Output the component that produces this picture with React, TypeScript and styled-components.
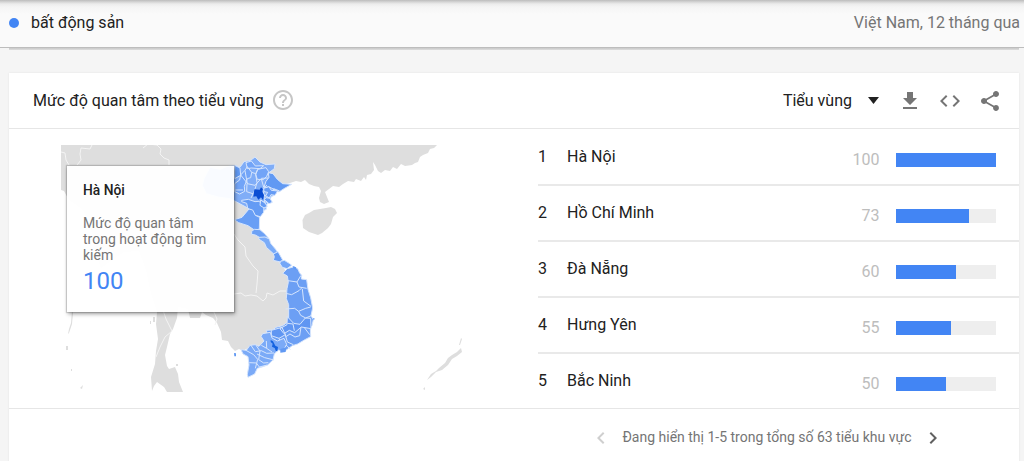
import React from "react";
import styled, { createGlobalStyle } from "styled-components";

const GlobalStyle = createGlobalStyle`
  * { box-sizing: border-box; }
  body {
    margin: 0;
    background: #f5f5f5;
    font-family: Roboto, "Liberation Sans", sans-serif;
    color: #212121;
    overflow: hidden;
  }
`;

const Page = styled.div`
  height: 461px;
  overflow: hidden;
`;

const TopBar = styled.header`
  height: 48px;
  display: flex;
  align-items: center;
  justify-content: space-between;
  padding: 0 4px 1px 9px;
  border-bottom: 1px solid #bdbdbd;
  background: linear-gradient(#bcbcbc 0, #d6d6d6 2px, #ececec 4px, #f5f5f5 7px, #fafafa 14px);
`;

const Term = styled.div`
  display: flex;
  align-items: center;
  gap: 12px;
  font-size: 16px;
  line-height: 20px;
`;

const Dot = styled.span`
  width: 10px;
  height: 10px;
  border-radius: 50%;
  background: #4285f4;
`;

const Scope = styled.div`
  font-size: 16px;
  line-height: 20px;
  color: #757575;
`;

const PreviousEdge = styled.div`
  height: 2px;
  margin: 0 5px 23px 9px;
  background: linear-gradient(#c8c8c8, #dedede);
`;

const Card = styled.main`
  margin: 0 5px 0 9px;
  height: 400px;
  background: #fff;
  box-shadow: 0 0 2px rgba(0, 0, 0, 0.08);
`;

const CardHeader = styled.div`
  height: 56px;
  display: flex;
  align-items: center;
  padding: 0 17px 0 24px;
  border-bottom: 1px solid #e6e6e6;
`;

const Title = styled.h1`
  margin: 0;
  font-size: 16px;
  line-height: 20px;
  font-weight: 400;
`;

const HelpIcon = styled.svg`
  width: 24px;
  height: 24px;
  margin-left: 7px;
  margin-top: -2px;
  fill: #c6c6c6;
`;

const Tools = styled.div`
  margin-left: auto;
  display: flex;
  align-items: center;
`;

const Picker = styled.div`
  display: flex;
  align-items: center;
  gap: 16px;
  font-size: 16px;
  line-height: 20px;
`;

const ToolIcon = styled.svg<{ $gap: number }>`
  width: 24px;
  height: 24px;
  margin-left: ${(p) => p.$gap}px;
  fill: #757575;
`;

const CardBody = styled.div`
  height: 280px;
  display: flex;
  border-bottom: 1px solid #e6e6e6;
`;

const MapPane = styled.div`
  position: relative;
  width: 529px;
  padding: 16px 0 0 52px;
`;

const MapSvg = styled.svg`
  display: block;
`;

const Tooltip = styled.div`
  position: absolute;
  left: 57.5px;
  top: 36.5px;
  width: 167px;
  height: 146px;
  padding: 16px 16px 16px 16.5px;
  background: rgba(255, 255, 255, 0.95);
  box-shadow: 0 0 1px 1px rgba(0, 0, 0, 0.15), 1px 2px 4px rgba(0, 0, 0, 0.38);
`;

const TipPlace = styled.div`
  font-size: 13.8px;
  line-height: 16px;
  font-weight: 500;
`;

const TipLabel = styled.div`
  margin-top: 17px;
  font-size: 14px;
  line-height: 16.3px;
  color: #757575;
  white-space: nowrap;
`;

const TipValue = styled.div`
  margin-top: 4px;
  font-size: 24px;
  line-height: 28px;
  color: #4285f4;
`;

const Ranking = styled.div`
  flex: 1;
  padding-top: 1px;
`;

const RankRow = styled.div`
  height: 56px;
  display: flex;
  align-items: center;
  border-bottom: 2px solid #e9e9e9;
  padding-right: 23.500px;
  font-size: 16px;
  line-height: 20px;
  &:last-child {
    height: 54px;
    border-bottom: 0;
  }
`;

const Rank = styled.span`
  width: 29px;
  margin-top: -1px;
`;

const Region = styled.span`
  flex: 1;
  margin-top: -1px;
`;

const Score = styled.span`
  color: #bdbdbd;
  padding-top: 6px;
`;

const Track = styled.span`
  width: 100px;
  height: 14px;
  margin: 5px 0 0 16px;
  background: #eee;
`;

const Fill = styled.span`
  display: block;
  height: 100%;
  background: #4285f4;
`;

const Pager = styled.div`
  height: 56px;
  display: flex;
  align-items: center;
  justify-content: flex-end;
  padding-right: 74.500px;
  font-size: 14px;
  color: #757575;
`;

const PagerArrow = styled.svg<{ $off?: boolean }>`
  width: 24px;
  height: 24px;
  margin: 2px 0 0;
  fill: ${(p) => (p.$off ? "#cfcfcf" : "#616161")};
`;

const PagerText = styled.span`
  margin: 0 9px;
`;

const regions = [
  { name: "Hà Nội", score: 100 },
  { name: "Hồ Chí Minh", score: 73 },
  { name: "Đà Nẵng", score: 60 },
  { name: "Hưng Yên", score: 55 },
  { name: "Bắc Ninh", score: 50 },
];

function VietnamMap() {
  return (
    <MapSvg width="405" height="248" viewBox="61 145 405 248" strokeLinejoin="round">
      <g fill="#dedede">
        <path d="M61 145H437L434 148 430 149 428 153 423 155 420 157 418 162 415 163 412 165 405 166 401 164 397 169 393 167 390 171 385 170 381 173 378 171 375 165 373 162 374 170 371 174 367 175 366 180 364 177 361 181 356 179 354 182 348 181 343 184 339 187 333 186 329 189 325 192 327 197 329 202 324 204 320 202 319 198 321 191 319 187 314 186 309 184 305 180 301 182 296 181 290 183 280 186 270 195 262 206 257 220 257 233 283 266 300 300 302 330 274 342 246 349 243 351 239 349 235 351 231 347 228 341 222 340 221 332 217 323 213 318 206 315 202 312 200 318 190 318 188 309 178 307 177 318 173 329 170 334 167 347 165 355 167 366 169 369 175 367 178 374 179 382 183 392H167L164 387 157 382 154 386 152 391 151 377 155 364 156 351 158 339 156 324 157 312 151 294 146 270 139 251 124 252 101 268 94 248 90 222 82 209 69 200 64 191 61 190Z" />
        <path d="M302.500 220 305 215 309 213 314 210 320 209 326 208 331 207 335 209 337 213 333 217 331 224 328 228 322 233 318 235 309 232 303 228Z" />
        <path d="m427 380 4-6 5-3 3-3 6-5 3-5 4-3 5-3 4-4 1 4-5 4-5 3-4 6-6 5-6 2-5 5ZM459 345l2-7 1 1-2 6ZM423 389l2-2v3ZM72 311l1 2-1 11-3 9-1 1 1-5 2-6ZM66 346h2v4h-2ZM71 369h1v2h-1ZM80 388l3-3-1 4ZM153 317h2v5h-2ZM150 321h1v3h-1ZM176 364h2v2h-2Z" />
      </g>
      <g fill="none" stroke="#f4f4f4" strokeWidth="1">
        <path d="M61 152 65 153 66 160 69 165M92 145 90 149 81 148 80 154 81 160 77 165M143 148 148 144 157 145 161 149 160 154 164 158 169 160 169 165" />
        <path d="M163 310 166 319 172 331 165 337 160 347 156 357M234 234 238 240 245 247 246 256 253 266 258 271 257 284 256 293M213 310 217 319 215 325M234 294 241 293 245 296 251 295 257 296 263 301 266 298 267 293 273 295 280 291 286 291" />
      </g>
      <g transform="translate(220 140) scale(.33333)" stroke="#d6e5fd" strokeWidth="3">
        <path fill="#80adf7" d="m-30 82 30 6 20-8 26-4 14 6 12-17 20-4 13-10 15 15 18 8 27-2-2 14-16 12 1 16 14-2 10 16 14 5 18 1-19 12-13 8-9 12-9 4-7 14-9 14 1 10-18 8-22-3-27-15-26-14-16-8-35-5-36-10-12-25 5-20Z" />
        <path fill="#6199f3" d="m44 76 16 8 2 22-18 10ZM145 98l14 3 13 17 16 13 27 2-23 13-15 10-17-9-12-6-16 1 6-18 9-12Z" />
        <path fill="#72a4f7" d="m44 131 15-11 3-15 13-14 7-11 13 17-3 16-10 3-9 23 1 15-15 8-15-7ZM78 68l16-5 12 15 25-1-11 9-26-2-12 2ZM113 88l25-5 8 12-6 14-10 10-18-1-5-14Z" />
        <path fill="#649bf4" d="m65 181 20-3 20 7 12-1 15 13-1 20-10 13-16-4-10-13-12-9-3-14-15-5Z" />
        <path fill="#689ef5" d="m87 207 11 3 8 16 13 6-1 35-12 5-22-15-28-9-13-9 23-7Z" />
        <path fill="none" d="M46 150H69M62 105 83 131M95 97 107 101 111 128 104 150M113 89 107 101M75 92l7 39 23 5 19-21 21-1M81 131 80 155 107 164M124 117l7 24 18 4M105 150l-12 24M141 135l-14 13 7 20 23-8 4-14 18 7M135 168l-2 18 20 1M120 180l16 9-2 14" />
        <path fill="#659bf4" d="m131 145 16-5 7 11 19 2-8 13-12-2-5 10-11-7 6-10-11-2ZM138 173l12 2 7 12-10 4-14-12ZM122 180l13 9 7 10-10 5-12-8Z" />
        <path fill="#0b4ed3" stroke="none" d="m103 148 16 1 4-7 6 5-2 8 5 11-3 14-6-8-8 7-6-10-9 1Z" />
        <path fill="#6da1f5" d="m95 274 8-6 17 1 14 12 13 15-12-2-15-1-14-8-11-2Z" />
        <path fill="#7aabf8" d="m118 292 17-1 13 6 4 13 15 18 9 14-16-1-21-19-6-14-17-11Z" />
      </g>
      <g transform="translate(220 220) scale(.33333)" stroke="#d6e5fd" strokeWidth="3">
        <path fill="#659bf4" d="m160 102 14-7 9 16 5 9-7 6-21-5 3-11Z" />
        <path fill="#75a7f7" d="m181 124 12-3 18 11 4 4-14 10-14-4-7-11Z" />
        <path fill="#6c9ff4" d="m188 160 14-14 20-6 11 6 6 13 6 7-1 11 16 2 4 29 8 25 6 31-5 23 7 12-4 18-5 8 1 25-19 10-20 12-16 5-19 14-15 1-10-6-4-24-24-9-6-22 19-1 10-8 20-5 18-13v-50l-7-18 2-30 4-19-3-19Z" />
        <path fill="#6096f2" d="m202 290 19 20 19 3 16-19 16 1 1 31-29-5-20 17-16-7-16 10-12-15 21-12ZM154 331l32-9 10 22-19 11-23-8Z" />
        <path fill="none" d="m204 182 27 4 12-20M231 186l6 15 23 4M197 220l18 4 22-12 8-8M247 207l4 36 22 16M197 267l27-2 12 9 21-9 15-4M236 274l6 12 15 8 17-7M202 310l17 2 4 20M243 321l-4 26-14 4-15-9-14 9M254 324l15 20M177 355l7 18 17 4 10 12M195 341l7 25 18 8" />
        <path fill="#7baaf7" d="m128 341 23-4 5 17 16 9 20-8 8 18-12 22-13-5-12 12-4 18-16 15-17 6-14 4-8 17-20 10-2-9 5-28-3-25-15-8-6-13 16 2 11-15 16-2 11 5 15-16-9-14Z" />
        <path fill="none" d="m92 375 14 20 18-3 16 8 22-1M108 376l12 17-4 26 15 10 14-1M78 391l23 13 12 14-7 27M88 428l21 1 9 12 24-6M111 402l23 11 28 7M139 363l1 22 16 11M124 376l16 9" />
        <path fill="#1462df" stroke="none" d="m152 360 7 4 7 13 8 4-2 13-5-2-3-8-8-4 2-9-6-5Z" />
        <path fill="#6199f3" stroke="none" d="m181 387 18-5-2 14-16 2ZM42 399l6 1v9h-5ZM218 138l10 4 1 8-8-3ZM278 294l7 2-4 4Z" />
      </g>
    </MapSvg>
  );
}

export default function App() {
  return (
    <Page>
      <GlobalStyle />
      <TopBar>
        <Term><Dot />bất động sản</Term>
        <Scope>Việt Nam, 12 tháng qua</Scope>
      </TopBar>
      <PreviousEdge />
      <Card>
        <CardHeader>
          <Title>Mức độ quan tâm theo tiểu vùng</Title>
          <HelpIcon viewBox="0 0 24 24">
            <path d="M11 18h2v-2h-2v2zm1-16C6.480 2 2 6.480 2 12s4.480 10 10 10 10-4.480 10-10S17.520 2 12 2zm0 18c-4.410 0-8-3.590-8-8s3.590-8 8-8 8 3.590 8 8-3.590 8-8 8zm0-14c-2.210 0-4 1.790-4 4h2c0-1.100.9-2 2-2s2 .9 2 2c0 2-3 1.750-3 5h2c0-2.250 3-2.500 3-5 0-2.210-1.790-4-4-4z" />
          </HelpIcon>
          <Tools>
            <Picker>
              Tiểu vùng
              <svg width="11" height="7" viewBox="0 0 11 7"><path d="M0 0h11L5.500 7z" fill="#212121" /></svg>
            </Picker>
            <ToolIcon $gap={19} viewBox="0 0 24 24"><path d="M19 9h-4V3H9v6H5l7 7 7-7zM5 18v2h14v-2H5z" /></ToolIcon>
            <ToolIcon $gap={16} viewBox="0 0 24 24"><path d="M9.400 16.600 4.800 12l4.600-4.600L8 6l-6 6 6 6 1.400-1.400zm5.200 0 4.600-4.600-4.600-4.600L16 6l6 6-6 6-1.400-1.400z" /></ToolIcon>
            <ToolIcon $gap={16} viewBox="0 0 24 24"><path d="M18 16.080c-.76 0-1.440.3-1.960.77L8.910 12.700c.05-.23.09-.46.09-.7s-.04-.47-.09-.7l7.050-4.110c.54.5 1.250.81 2.040.81 1.660 0 3-1.340 3-3s-1.340-3-3-3-3 1.340-3 3c0 .24.040.47.090.7L8.040 9.810C7.500 9.310 6.790 9 6 9c-1.660 0-3 1.340-3 3s1.340 3 3 3c.79 0 1.500-.31 2.040-.81l7.120 4.160c-.05.21-.08.43-.08.65 0 1.610 1.310 2.920 2.920 2.920s2.920-1.310 2.920-2.920-1.310-2.920-2.920-2.920z" /></ToolIcon>
          </Tools>
        </CardHeader>
        <CardBody>
          <MapPane>
            <VietnamMap />
            <Tooltip>
              <TipPlace>Hà Nội</TipPlace>
              <TipLabel>Mức độ quan tâm<br />trong hoạt động tìm<br />kiếm</TipLabel>
              <TipValue>100</TipValue>
            </Tooltip>
          </MapPane>
          <Ranking>
            {regions.map((r, i) => (
              <RankRow key={r.name}>
                <Rank>{i + 1}</Rank>
                <Region>{r.name}</Region>
                <Score>{r.score}</Score>
                <Track><Fill style={{ width: `${r.score}%` }} /></Track>
              </RankRow>
            ))}
          </Ranking>
        </CardBody>
        <Pager>
          <PagerArrow $off viewBox="0 0 24 24"><path d="M15.410 7.410 14 6l-6 6 6 6 1.410-1.410L10.830 12z" /></PagerArrow>
          <PagerText>Đang hiển thị 1-5 trong tổng số 63 tiểu khu vực</PagerText>
          <PagerArrow viewBox="0 0 24 24"><path d="M10 6 8.590 7.410 13.170 12l-4.580 4.590L10 18l6-6z" /></PagerArrow>
        </Pager>
      </Card>
    </Page>
  );
}
